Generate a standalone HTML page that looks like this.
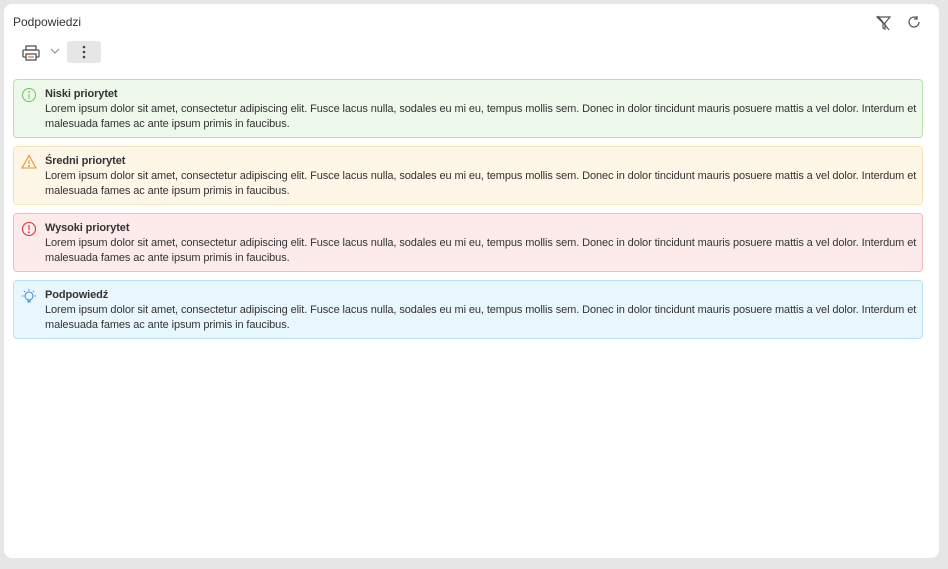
<!DOCTYPE html>
<html><head><meta charset="utf-8"><style>
*{box-sizing:border-box;margin:0;padding:0}
body{width:948px;height:569px;background:#e6e6e6;font-family:"Liberation Sans",sans-serif;color:#333;position:relative;overflow:hidden}
.card{position:absolute;left:4px;top:4px;width:935px;height:554px;background:#fff;border-radius:8px}
.title{position:absolute;left:9px;top:11px;font-size:12px;color:#333}
.tb{position:absolute;left:18px;top:41px}
.more{position:absolute;left:63px;top:37px;width:34px;height:22px;background:#e6e6e6;border-radius:3px}
.alert{position:absolute;left:9px;width:910px;height:59px;border:1px solid;border-radius:4px;padding:7px 0 0 31px;font-size:11px;line-height:15px;letter-spacing:-0.1px;white-space:nowrap;overflow:hidden}
.alert b{font-weight:bold;display:block}
.alert svg{position:absolute;left:7px;top:7px}
.g{top:75px;background:#eef8ea;border-color:#b6e0ad}
.y{top:142px;background:#fef6e7;border-color:#f9e3b8}
.r{top:209px;background:#fdebec;border-color:#f4bcc0}
.bl{top:276px;background:#e8f6fd;border-color:#b8e2f5}
</style></head><body>
<div class="card">
<div class="title">Podpowiedzi</div>
<svg class="tb" width="20" height="18" viewBox="0 0 20 18" fill="none" stroke="#555" stroke-width="1.3"><rect x="4" y="1" width="10" height="4"/><rect x="1" y="5" width="16" height="7" rx="1"/><rect x="4" y="9" width="10" height="6" fill="#fff"/><line x1="6" y1="12" x2="12" y2="12" stroke="#e07a3a"/></svg>
<svg style="position:absolute;left:46px;top:44px" width="10" height="6" viewBox="0 0 10 6"><path d="M1 1l4 4 4-4" fill="none" stroke="#888" stroke-width="1"/></svg>
<div class="more"><svg width="34" height="22"><circle cx="17" cy="6" r="1.3" fill="#444"/><circle cx="17" cy="11" r="1.3" fill="#444"/><circle cx="17" cy="16" r="1.3" fill="#444"/></svg></div>
<svg style="position:absolute;left:872px;top:11px" width="16" height="16" viewBox="0 0 16 16" fill="none" stroke="#555" stroke-width="1.2"><path d="M1 2h13l-5 6v6l-2-1V8z"/><line x1="2" y1="1" x2="13" y2="15"/></svg>
<svg style="position:absolute;left:903px;top:11px" width="14" height="14" viewBox="0 0 14 14" fill="none" stroke="#555" stroke-width="1.2"><path d="M12 7a5 5 0 1 1-2-4"/><path d="M10 1v3h-3"/></svg>
<div class="alert g"><svg width="16" height="16" viewBox="0 0 16 16" fill="none" stroke="#6cc25a" stroke-width="1"><circle cx="8" cy="8" r="6.5"/><line x1="8" y1="7" x2="8" y2="12"/><circle cx="8" cy="4.8" r=".4"/></svg><b>Niski priorytet</b>Lorem ipsum dolor sit amet, consectetur adipiscing elit. Fusce lacus nulla, sodales eu mi eu, tempus mollis sem. Donec in dolor tincidunt mauris posuere mattis a vel dolor. Interdum et<br>malesuada fames ac ante ipsum primis in faucibus.</div>
<div class="alert y"><svg width="16" height="16" viewBox="0 0 16 16" fill="none" stroke="#e5952a" stroke-width="1.1"><path d="M8 1.5L15 14H1z"/><line x1="8" y1="6" x2="8" y2="10"/><circle cx="8" cy="12" r=".4"/></svg><b>Średni priorytet</b>Lorem ipsum dolor sit amet, consectetur adipiscing elit. Fusce lacus nulla, sodales eu mi eu, tempus mollis sem. Donec in dolor tincidunt mauris posuere mattis a vel dolor. Interdum et<br>malesuada fames ac ante ipsum primis in faucibus.</div>
<div class="alert r"><svg width="16" height="16" viewBox="0 0 16 16" fill="none" stroke="#d9323c" stroke-width="1.1"><circle cx="8" cy="8" r="6.5"/><line x1="8" y1="4" x2="8" y2="9"/><circle cx="8" cy="11.3" r=".4"/></svg><b>Wysoki priorytet</b>Lorem ipsum dolor sit amet, consectetur adipiscing elit. Fusce lacus nulla, sodales eu mi eu, tempus mollis sem. Donec in dolor tincidunt mauris posuere mattis a vel dolor. Interdum et<br>malesuada fames ac ante ipsum primis in faucibus.</div>
<div class="alert bl"><svg width="16" height="16" viewBox="0 0 16 16" fill="none" stroke="#2a8fd0" stroke-width="1"><circle cx="8" cy="8" r="4"/><path d="M7 12v2h2v-2"/><path d="M8 1v1.5M1 8h1.5M13.5 8H15M3 3l1 1M13 3l-1 1"/></svg><b>Podpowiedź</b>Lorem ipsum dolor sit amet, consectetur adipiscing elit. Fusce lacus nulla, sodales eu mi eu, tempus mollis sem. Donec in dolor tincidunt mauris posuere mattis a vel dolor. Interdum et<br>malesuada fames ac ante ipsum primis in faucibus.</div>
</div>
</body></html>
